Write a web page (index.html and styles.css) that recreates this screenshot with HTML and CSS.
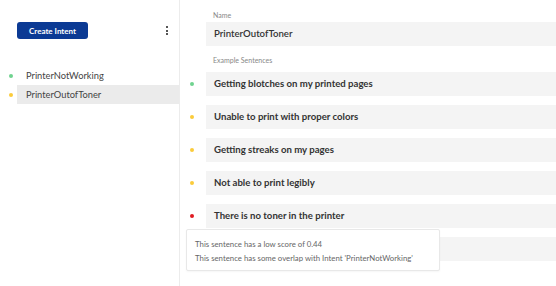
FILE: index.html
```html
<!DOCTYPE html>
<html lang="en">
<head>
    <meta charset="UTF-8">
    <meta name="viewport" content="width=device-width, initial-scale=1.0">
    <title>Intents</title>
    <link rel="stylesheet" href="styles.css">
</head>
<body>

<div class="layout">
    <!-- Intent list -->
    <div class="sidebar">
        <div class="toolbar">
            <button class="create-btn">Create Intent</button>
            <span class="kebab"><i></i><i></i><i></i></span>
        </div>
        <ul class="intents">
            <li class="intent"><span class="dot green"></span><span class="intent-name">PrinterNotWorking</span></li>
            <li class="intent selected"><span class="dot yellow"></span><span class="intent-name">PrinterOutofToner</span></li>
        </ul>
    </div>

    <!-- Intent editor -->
    <div class="editor">
        <div class="label">Name</div>
        <div class="row name-row">
            <span class="gutter"></span>
            <div class="field name-field">PrinterOutofToner</div>
        </div>

        <div class="label sentences-label">Example Sentences</div>
        <div class="sentences">
            <div class="row"><span class="gutter"><span class="dot green"></span></span><div class="field">Getting blotches on my printed pages</div></div>
            <div class="row"><span class="gutter"><span class="dot yellow"></span></span><div class="field">Unable to print with proper colors</div></div>
            <div class="row"><span class="gutter"><span class="dot yellow"></span></span><div class="field">Getting streaks on my pages</div></div>
            <div class="row"><span class="gutter"><span class="dot yellow"></span></span><div class="field">Not able to print legibly</div></div>
            <div class="row"><span class="gutter"><span class="dot red"></span></span><div class="field">There is no toner in the printer</div></div>
            <div class="row"><span class="gutter"></span><div class="field"></div></div>
        </div>

        <div class="tooltip">
            <p>This sentence has a low score of 0.44</p>
            <p>This sentence has some overlap with Intent 'PrinterNotWorking'</p>
        </div>
    </div>
</div>

</body>
</html>
```

FILE: styles.css
```css
body {
    font-family: Lato, "Noto Sans", sans-serif;
    margin: 0;
    background: #fff;
    color: #333;
}
.layout {
    display: flex;
    height: 286px;
    overflow: hidden;
}
.sidebar {
    width: 179px;
    border-right: 1px solid #ececec;
    flex-shrink: 0;
}
.toolbar {
    display: flex;
    align-items: center;
    justify-content: space-between;
    padding: 22px 11px 0 17px;
}
.create-btn {
    width: 71px;
    height: 17px;
    padding: 0;
    border: none;
    border-radius: 3px;
    background-color: #0b3a94;
    color: #fff;
    font-family: inherit;
    font-size: 8px;
    font-weight: bold;
    cursor: pointer;
}
.kebab {
    display: flex;
    flex-direction: column;
    gap: 1.5px;
}
.kebab i {
    display: block;
    width: 2px;
    height: 2px;
    background: #555;
}
.intents {
    list-style: none;
    margin: 27px 0 0;
    padding: 0;
}
.intent {
    display: flex;
    align-items: center;
    height: 19px;
    font-size: 9.3px;
    color: #444;
}
.intent .dot {
    margin: 0 4px 0 9px;
}
.intent-name {
    flex: 1;
    align-self: stretch;
    display: flex;
    align-items: center;
    padding-left: 9px;
}
.intent.selected .intent-name {
    background: #ebebeb;
}
.dot {
    display: inline-block;
    width: 4px;
    height: 4px;
    border-radius: 50%;
}
.green { background: #6fd38f; }
.yellow { background: #fbcb3a; }
.red { background: #e01b22; }

.editor {
    flex: 1;
    position: relative;
    padding-top: 11px;
}
.label {
    font-size: 7px;
    color: #888;
    padding-left: 33px;
    height: 8px;
    line-height: 8px;
    margin-bottom: 3px;
}
.sentences-label {
    margin-bottom: 8px;
}
.row {
    display: flex;
    align-items: center;
    height: 24px;
    margin-bottom: 9px;
}
.name-row {
    margin-bottom: 10px;
}
.gutter {
    width: 26px;
    display: flex;
    justify-content: center;
    flex-shrink: 0;
}
.gutter .dot {
    margin-right: 3px;
}
.field {
    flex: 1;
    height: 24px;
    line-height: 24px;
    background: #f4f4f4;
    padding-left: 8px;
    font-size: 9.6px;
    font-weight: bold;
    color: #333;
}
.field.name-field {
    font-size: 9.6px;
    font-weight: 600;
    color: #333;
}
.tooltip {
    position: absolute;
    left: 6px;
    top: 229px;
    width: 254px;
    height: 42px;
    background: #fff;
    border: 1px solid #e8e8e8;
    border-radius: 2px;
    box-shadow: 0 1px 2px rgba(0, 0, 0, 0.04);
    padding: 10px 0 0 8px;
    box-sizing: border-box;
}
.tooltip p {
    margin: 0 0 5px;
    font-size: 7.8px;
    color: #666;
    line-height: 9px;
}
```
